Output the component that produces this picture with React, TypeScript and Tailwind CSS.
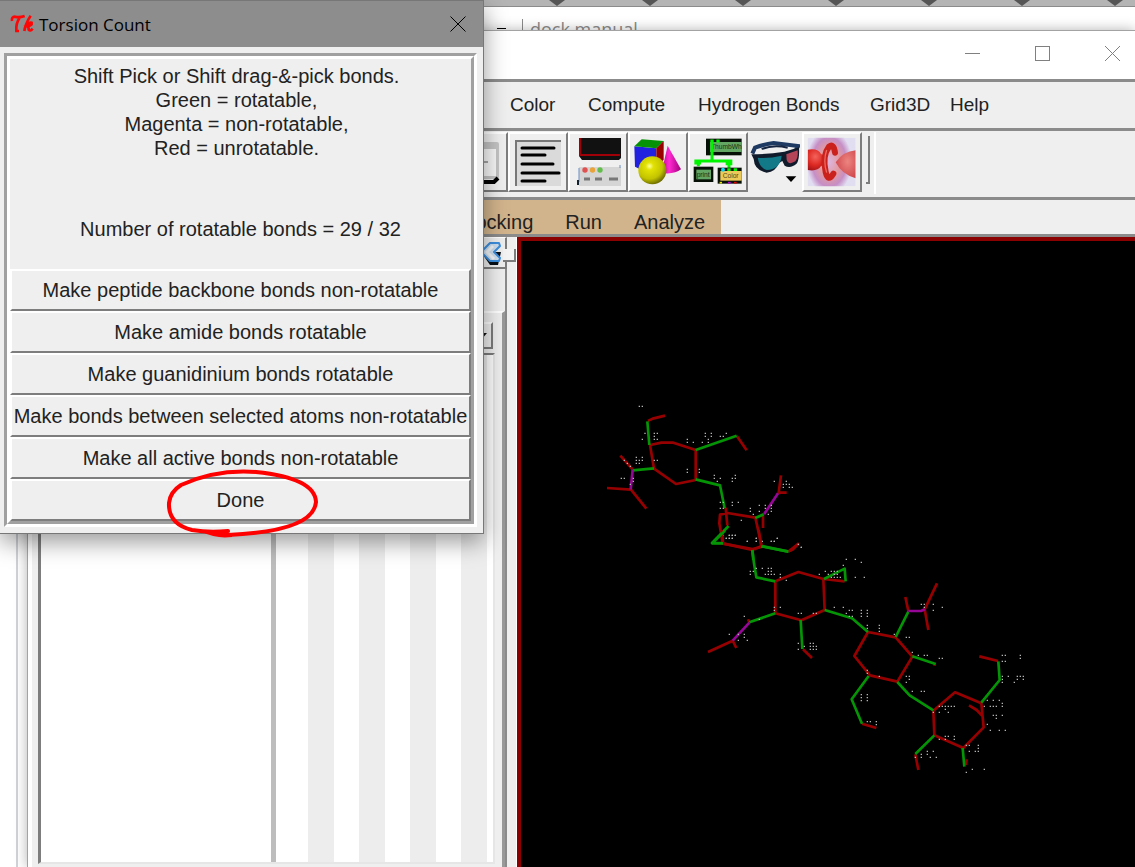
import React from "react";

type Fragment = {
  x: number;
  y: number;
  red: string;
  green: string;
  magenta: string;
  dots: string;
};

// Each fragment is drawn on a grid three times finer than the viewer's own.
const fragments: Fragment[] = [
  {
    x: 590,
    y: 390,
    red: "M174 93L188 86L225 77 M180 165L214 158H250L317 180V270L258 282L192 236L180 165 M440 137L470 181 M91 197L128 238 M51 294L123 299L169 356 M573 256L566 308H590 M407 353L412 406 M412 369L496 383L515 468L487 480L398 460L388 400L390 374L412 369 M519 374V414 M596 484L627 460",
    green:
      "M178 165L172 94 M317 180L440 137 M128 241L192 235 M317 268L390 286L404 355 M416 408L366 459H398 M496 384L521 373 M515 468L596 485 M487 480L490 510",
    magenta: "M128 239L122 299 M564 310L522 373",
    dots: "148 49 157 49 165 130 193 130 202 130 193 139 157 148 193 148 202 148 292 148 292 157 310 157 346 130 364 130 346 139 364 139 355 148 355 157 337 157 391 139 400 139 409 130 139 202 157 202 139 211 148 211 157 211 139 220 148 220 103 211 112 220 121 229 193 211 202 211 292 238 292 247 328 238 328 247 94 265 103 265 130 265 130 274 121 283 373 256 373 265 382 274 391 265 436 256 427 265 436 265 427 274 391 337 400 337 427 337 445 337 427 346 391 355 400 355 481 355 481 364 490 373 508 346 526 346 544 346 526 355 544 355 544 364 535 373 508 364 553 274 589 274 580 283 589 283 598 283 580 292 598 292 607 292 454 391 400 436 418 436 427 436 436 436 409 445 418 445 427 445 472 454 499 445 499 454 517 454 508 472 544 454 553 454 562 445 625 463 634 472",
  },
  {
    x: 690,
    y: 530,
    red: "M96 0L99 41L187 57L214 51L206 0 M295 65L309 58L326 40 M256 154L325 126L400 147L404 240L334 271L256 250V154 M400 147L464 154 M174 268L178 277 M54 366L128 332L139 354 M339 358L366 384 M534 306L617 322L667 380L622 455L540 436L493 378L534 306 M646 201L655 243 M741 160L704 238L715 300 M730 403L738 403",
    green:
      "M105 2L67 40H99 M214 49L295 65 M187 60L192 100L199 142L256 154 M402 147L464 116L467 154 M404 240L486 265L534 306 M256 250L178 277 M332 270L337 357 M617 321L655 245 M667 379L737 402",
    magenta: "M178 278L128 332 M655 243H693L704 238",
    dots: "118 16 127 16 136 16 109 25 118 25 127 25 172 34 199 25 199 34 244 34 253 34 262 25 325 43 334 52 181 124 190 124 199 115 181 133 217 115 235 115 244 115 226 133 235 124 244 124 235 133 244 133 253 133 271 133 271 142 289 151 388 133 406 124 424 124 433 124 442 124 415 133 433 133 442 133 424 142 433 142 442 142 451 142 460 106 469 88 496 88 514 97 496 142 523 142 253 232 271 232 253 241 325 250 334 250 370 250 379 250 433 232 460 232 478 241 487 241 469 250 478 259 487 259 514 241 532 241 514 250 532 250 514 259 532 259 163 259 208 268 118 313 145 313 163 313 163 322 145 331 172 331 325 340 343 349 325 358 361 340 370 340 361 349 370 349 379 349 361 358 370 358 379 358 532 286 532 295 568 286 568 295 568 304 613 313 649 322 658 322 667 367 685 376 703 376 712 376 748 385 757 385 532 421 532 430 568 439 649 439 658 439 649 457 658 448 694 223 703 223 703 232 730 223 730 241 757 232",
  },
  {
    x: 840,
    y: 570,
    red: "M66 461L109 474 M280 422L345 367L424 400L431 472L370 534L283 496L280 422 M387 406L410 420L429 440 M418 259L474 273 M226 553L235 600 M380 568L377 585",
    green:
      "M86 318L35 388L66 461 M172 336L209 376L280 421 M475 274L479 330L424 398 M283 496L226 552 M368 534L373 590",
    magenta: "",
    dots: "64 374 64 383 82 374 82 383 64 392 82 392 82 455 91 455 109 455 109 464 217 364 244 364 253 364 487 256 496 256 487 274 496 274 541 256 541 265 487 319 487 328 505 319 487 337 532 319 541 319 550 319 532 328 550 328 523 337 442 391 460 391 478 391 487 400 433 409 451 409 460 409 469 409 487 409 280 427 298 409 307 409 316 409 325 409 334 409 343 409 316 418 325 427 298 427 460 436 469 436 487 436 469 445 442 463 451 481 478 481 496 481 316 499 325 499 343 499 298 508 316 508 343 508 379 526 388 526 415 526 415 535 388 544 406 544 415 544 244 553 262 544 280 544 262 553 244 562 271 562 289 562 226 562 379 607 397 598 433 598",
  },
];

function dotPath(list: string) {
  const n = list.split(" ");
  let d = "";
  for (let i = 0; i + 1 < n.length; i += 2) d += `M${Number(n[i]) - 2} ${n[i + 1]}h4`;
  return d;
}

function Molecule() {
  return (
    <svg
      width="614"
      height="626"
      viewBox="521 241 614 626"
      className="block shrink-0"
      role="img"
      aria-label="Ligand"
    >
      {fragments.map((f) => (
        <g
          key={f.x}
          transform={`translate(${f.x} ${f.y}) scale(0.33333)`}
          fill="none"
          strokeWidth="8"
          strokeLinejoin="round"
        >
          <path d={f.red} stroke="#960000" />
          <path d={f.green} stroke="#059405" />
          <path d={f.magenta} stroke="#960696" />
          <path d={dotPath(f.dots)} stroke="#b4b4b4" strokeWidth="4" />
        </g>
      ))}
    </svg>
  );
}

function ToolButton({ label, children }: { label: string; children: React.ReactNode }) {
  return (
    <button
      aria-label={label}
      className="flex h-[60px] w-[60px] shrink-0 items-center justify-center border-2 border-t-white border-l-white border-r-[#7d7d7d] border-b-[#7d7d7d] bg-[#efefef]"
    >
      {children}
    </button>
  );
}

function Toolbar() {
  return (
    <div className="flex h-[66px] items-start bg-[#efefef] pt-px pl-[420px]">
      <ToolButton label="Open window">
        <svg width="48" height="48" viewBox="0 0 48 48">
          <rect x="2" y="4" width="43" height="37" rx="2" fill="#c4c4c4" />
          <rect x="4" y="11" width="38" height="27" fill="#f8f8f8" />
          <path d="M12 24H34" stroke="#a5a5a5" strokeWidth="2" />
          <path d="M5 44H40L44 40" stroke="#000" strokeWidth="4" fill="none" />
        </svg>
      </ToolButton>
      <ToolButton label="Text">
        <svg width="48" height="48" viewBox="0 0 48 48">
          <rect x="1" y="2" width="46" height="46" fill="#dadada" />
          <path d="M2 48V3H47" stroke="#777" strokeWidth="2" fill="none" />
          <path
            d="M8 10H40M8 17H31M8 26H39M8 35H45M8 43H31"
            stroke="#000"
            strokeWidth="3"
            strokeLinecap="round"
          />
        </svg>
      </ToolButton>
      <ToolButton label="Show or hide panels">
        <svg width="48" height="48" viewBox="0 0 48 48">
          <path d="M5 0H47V20L45 22H8L5 18Z" fill="#111" />
          <path d="M6 0V17H46" stroke="#a00008" strokeWidth="2" fill="none" />
          <rect x="5" y="29" width="42" height="19" fill="#d5d5d5" />
          <path d="M5 30V44M46 27V30" stroke="#6b8fc0" strokeWidth="1" />
          <rect x="3" y="42" width="2" height="5" fill="#123" />
          <circle cx="11" cy="32" r="2.7" fill="#e05252" />
          <circle cx="18.5" cy="32" r="2.7" fill="#e9a33b" />
          <circle cx="26" cy="32" r="2.7" fill="#63bd4b" />
          <path d="M10 41H16M21 41H28M35 41H44" stroke="#777" strokeWidth="3" />
        </svg>
      </ToolButton>
      <ToolButton label="Geometry">
        <svg width="50" height="50" viewBox="460 37 150 150">
          <defs>
            <radialGradient id="ball" cx=".4" cy=".35" r=".7">
              <stop offset="0" stopColor="#ffff9c" />
              <stop offset=".2" stopColor="#e2e205" />
              <stop offset=".65" stopColor="#c3c300" />
              <stop offset="1" stopColor="#5e5e00" />
            </radialGradient>
            <linearGradient id="cone">
              <stop offset="0" stopColor="#c00090" />
              <stop offset=".4" stopColor="#ff2bd0" />
              <stop offset="1" stopColor="#a1007c" />
            </linearGradient>
          </defs>
          <path d="M464 65L530 71V133H480L466 126Z" fill="#2020e0" />
          <path d="M464 65L486 44L552 49L530 71Z" fill="#069206" />
          <path d="M530 71L552 49V105L530 130Z" fill="#9a0000" />
          <path d="M564 63L604 134Q585 150 545 145Z" fill="url(#cone)" />
          <circle cx="518" cy="137" r="42" fill="url(#ball)" />
        </svg>
      </ToolButton>
      <ToolButton label="Visual programming">
        <svg width="50" height="50" viewBox="40 40 150 150">
          <rect x="79" y="45" width="107" height="50" fill="#061006" />
          <rect x="91" y="55" width="95" height="30" fill="#63a663" />
          <text x="94" y="77" fontFamily="Liberation Sans, sans-serif" fontSize="20" fill="#143014">
            ThumbWh
          </text>
          <path
            d="M97 48V112M44 112H158M56 112V128M148 112V136M92 52H102M110 52H120M44 118H64M138 120H158"
            stroke="#00f400"
            strokeWidth="9"
          />
          <rect x="42" y="129" width="59" height="46" fill="#061006" />
          <rect x="50" y="138" width="44" height="29" fill="#63a663" />
          <text x="51" y="159" fontFamily="Liberation Sans, sans-serif" fontSize="20" fill="#143014">
            print
          </text>
          <rect x="114" y="132" width="72" height="48" fill="#061006" />
          <rect x="122" y="142" width="64" height="29" fill="#ecca5a" />
          <text x="129" y="164" fontFamily="Liberation Sans, sans-serif" fontSize="20" fill="#5b4510">
            Color
          </text>
          <circle cx="130" cy="138" r="6" fill="#11d4ee" />
          <path d="M143 138H172" stroke="#00f400" strokeWidth="8" strokeDasharray="10 9" />
          <path d="M120 177H127" stroke="#e4e400" strokeWidth="5" />
          <path d="M145 177H153" stroke="#b000d0" strokeWidth="5" />
          <path d="M163 177H171" stroke="#e00000" strokeWidth="5" />
        </svg>
      </ToolButton>
      <button
        aria-label="Stereo view"
        className="flex h-[60px] w-[54px] shrink-0 items-center justify-center bg-[#efefef]"
      >
        <svg width="50" height="50" viewBox="209 40 150 150">
          <path
            d="M216 90L224 72Q250 62 280 58L354 67L347 78"
            fill="none"
            stroke="#1e3a63"
            strokeWidth="12"
          />
          <path d="M244 76Q280 62 322 72" fill="none" stroke="#152440" strokeWidth="6" />
          <path
            d="M213 92Q260 92 312 84L356 71Q358 105 350 119Q330 137 313 126L306 112L295 119Q286 145 259 147Q222 140 220 106Z"
            fill="#101c2c"
          />
          <path d="M232 102Q265 105 304 96Q300 137 259 139Q238 133 232 102Z" fill="#117987" />
          <path d="M318 92L352 80Q354 102 345 113Q324 126 319 108Z" fill="#b44558" />
          <path d="M316 158H348L332 175Z" fill="#000" />
        </svg>
      </button>
      <ToolButton label="Docking tools">
        <svg width="50" height="50" viewBox="382 37 150 150">
          <defs>
            <radialGradient id="red-ball" cx=".4" cy=".35" r=".7">
              <stop offset="0" stopColor="#f4645c" />
              <stop offset=".6" stopColor="#dc2822" />
              <stop offset="1" stopColor="#a31519" />
            </radialGradient>
            <radialGradient id="pink-ball" cx=".6" cy=".4" r=".7">
              <stop offset="0" stopColor="#ec8580" />
              <stop offset="1" stopColor="#cd4248" />
            </radialGradient>
            <radialGradient id="halo">
              <stop offset="0" stopColor="#dcb6de" />
              <stop offset=".45" stopColor="#e39aa0" />
              <stop offset=".75" stopColor="#c58fc6" />
              <stop offset="1" stopColor="#e2def2" />
            </radialGradient>
            <clipPath id="tile">
              <rect x="384" y="39" width="144" height="146" />
            </clipPath>
          </defs>
          <g clipPath="url(#tile)">
            <rect x="384" y="39" width="144" height="146" fill="#e2def2" />
            <ellipse cx="449" cy="112" rx="68" ry="98" fill="url(#halo)" />
            <path d="M384 75Q416 70 424 88L442 96V117L424 124Q414 141 384 136Z" fill="url(#red-ball)" />
            <path d="M528 77Q490 80 468 113Q486 149 528 161Z" fill="url(#pink-ball)" />
            <path
              d="M466 84Q462 55 448 66Q427 93 438 142Q445 174 461 147"
              fill="none"
              stroke="#ca211d"
              strokeWidth="18"
              strokeLinecap="round"
            />
            <path d="M441 76Q430 108 441 144" fill="none" stroke="#ed695f" strokeWidth="4" />
          </g>
        </svg>
      </ToolButton>
      <div className="mt-1 ml-1 h-12 w-1 border-r-2 border-b-2 border-[#7d7d7d]" />
      <div className="h-[62px] w-[6px] border-r-2 border-white" />
    </div>
  );
}

function TreePanel() {
  return (
    <div className="flex w-[479px] shrink-0 flex-col bg-[#efefef]">
      <div className="flex h-[32px] justify-end border-b-2 border-[#7d7d7d]">
        <button
          aria-label="Collapse panel"
          className="flex w-[30px] items-center border-r-2 border-t border-t-white border-r-[#7d7d7d]"
        >
          <svg width="28" height="28" viewBox="0 0 28 28">
            <path d="M4 13H24L21 26H13Z" fill="#081018" />
            <path d="M13 4H22L23 7L17 13L23 19L22 22H13L4 13Z" fill="#cfe0f0" stroke="#3c8fdf" strokeWidth="2" strokeLinejoin="round" />
            <path d="M16 7L10 13L17 20" fill="none" stroke="#f3f7fb" strokeWidth="3" />
          </svg>
        </button>
      </div>
      <div className="h-[42px] border-r-2 border-[#8b8b8b]" />
      <div className="flex flex-1 border-r-2 border-[#8b8b8b]">
        <div className="flex flex-1 flex-col border-t-2 border-r-[3px] border-l-4 border-t-white border-r-[#999] border-l-white pr-[7px] pb-[3px] pl-[6px]">
          <div className="flex h-[40px] items-end justify-end pr-[2px] pb-1">
            <button
              aria-label="Choose view"
              className="flex h-[27px] w-[24px] items-center justify-center border-2 border-t-white border-l-white border-r-[#7d7d7d] border-b-[#7d7d7d]"
            >
              <svg width="12" height="8" viewBox="0 0 12 8">
                <path d="M0 1H12L6 8Z" fill="#111" />
              </svg>
            </button>
          </div>
          <div className="flex flex-1 border-t-2 border-r-2 border-b-2 border-l-[3px] border-t-[#7d7d7d] border-r-[#e6e6e6] border-b-[#e6e6e6] border-l-[#7d7d7d] bg-white">
            <div className="w-[230px]" />
            <div className="w-[5px] bg-[#bdbdbd]" />
            <div className="flex flex-1 gap-[25px] pl-8">
              <div className="w-[26px] bg-[#ededed]" />
              <div className="w-[26px] bg-[#ededed]" />
              <div className="w-[26px] bg-[#ededed]" />
              <div className="w-[26px] bg-[#ededed]" />
            </div>
          </div>
        </div>
      </div>
    </div>
  );
}

function MainWindow() {
  return (
    <section
      aria-label="Molecule viewer"
      className="absolute top-[30px] right-0 bottom-0 left-[27px] flex flex-col border-t border-l border-[#a3a3a3] bg-white shadow-[0_0_12px_rgba(0,0,0,0.3)]"
    >
      <div className="flex h-[48px] shrink-0 justify-end gap-[25px] pb-[3px] text-[#808080]">
        <button aria-label="Minimize" className="flex w-[45px] items-center justify-center">
          <svg width="15" height="15" viewBox="0 0 15 15" shapeRendering="crispEdges">
            <path d="M0 7.5H15" stroke="currentColor" />
          </svg>
        </button>
        <button aria-label="Maximize" className="flex w-[45px] items-center justify-center">
          <svg width="15" height="15" viewBox="0 0 15 15" shapeRendering="crispEdges">
            <rect x=".5" y=".5" width="14" height="14" fill="none" stroke="currentColor" />
          </svg>
        </button>
        <button aria-label="Close viewer" className="flex w-[45px] items-center justify-center">
          <svg width="15" height="15" viewBox="0 0 15 15">
            <path d="M0 0L15 15M15 0L0 15" stroke="currentColor" />
          </svg>
        </button>
      </div>
      <nav
        aria-label="Main menu"
        className="flex h-[49px] shrink-0 items-center border-t-[3px] border-[#8b8b8b] bg-[#efefef] pl-[482px] text-left text-[19px] whitespace-nowrap text-[#222]"
      >
        <button className="w-[78px] text-left">Color</button>
        <button className="w-[110px] text-left">Compute</button>
        <button className="w-[172px] text-left">Hydrogen Bonds</button>
        <button className="w-[80px] text-left">Grid3D</button>
        <button className="text-left">Help</button>
      </nav>
      <div className="shrink-0 border-y-[3px] border-[#8b8b8b]">
        <Toolbar />
      </div>
      <nav
        aria-label="Docking menu"
        className="flex h-[37px] shrink-0 border-b-[3px] border-[#8b8b8b] bg-[#efefef]"
      >
        <div className="flex items-end gap-8 bg-[#d2b48c] pr-4 pl-[433px] text-[20px] leading-6 text-[#222]">
          <button>Docking</button>
          <button>Run</button>
          <button>Analyze</button>
        </div>
      </nav>
      <div className="flex min-h-0 flex-1">
        <TreePanel />
        <div className="relative w-[10px] shrink-0 border-r border-white bg-[#efefef]">
          <button
            aria-label="Resize panel"
            className="absolute top-3 -left-1 h-[13px] w-[13px] border-r-2 border-b-2 border-[#7d7d7d] bg-[#f4f4f4]"
          />
        </div>
        <main className="min-w-0 flex-1 overflow-hidden border-t-4 border-l-4 border-[#8b0000] bg-black">
          <Molecule />
        </main>
      </div>
    </section>
  );
}

const actions = [
  "Make peptide backbone bonds non-rotatable",
  "Make amide bonds rotatable",
  "Make guanidinium bonds rotatable",
  "Make bonds between selected atoms non-rotatable",
  "Make all active bonds non-rotatable",
  "Done",
];

function TorsionDialog() {
  return (
    <section
      aria-label="Torsion Count"
      className="absolute top-0 left-0 w-[484px] border-t border-r border-b border-[#777] bg-[#efefef] pb-[6px] shadow-[0_8px_22px_rgba(0,0,0,0.4)]"
    >
      <header className="flex h-[46px] items-center bg-[#8d8d8d] pr-[17px] pl-[10px]">
        <svg width="24" height="20" viewBox="30 42 72 60" aria-hidden="true">
          <path
            d="M36 63Q34 50 45 50Q58 54 74 48M59 53Q47 70 49 93H57M92 47Q84 58 78 74Q74 84 73 93M78 80Q88 65 95 68Q97 77 82 79Q87 82 86 89Q91 95 98 86"
            fill="none"
            stroke="#ff0606"
            strokeWidth="8"
          />
        </svg>
        <h1 className="ml-[5px] flex-1 pt-[2px] font-['Open_Sans','Noto_Sans',sans-serif] text-[17px] text-black">
          Torsion Count
        </h1>
        <button aria-label="Close" className="p-0">
          <svg width="16" height="16" viewBox="0 0 16 16" className="block">
            <path d="M.5 .5L15.5 15.5M15.5 .5L.5 15.5" stroke="#000" />
          </svg>
        </button>
      </header>
      <div className="mt-[6px] mr-[6px] ml-1 border-[3px] border-t-[#a0a0a0] border-r-white border-b-white border-l-[#a0a0a0]">
        <div className="border-[3px] border-t-white border-r-[#a0a0a0] border-b-[#a0a0a0] border-l-white text-[20px] text-[#222]">
          <div className="h-[210px] pt-[5px] text-center leading-6">
            <div className="pr-2">
              <p>Shift Pick or Shift drag-&amp;-pick bonds.</p>
              <p>Green = rotatable,</p>
              <p>Magenta = non-rotatable,</p>
              <p>Red = unrotatable.</p>
            </div>
            <p className="mt-[57px]">Number of rotatable bonds = 29 / 32</p>
          </div>
          <div className="flex flex-col">
            {actions.map((a) => (
              <button
                key={a}
                className="h-[42px] border-2 border-t-white border-r-[#7d7d7d] border-b-[#7d7d7d] border-l-white whitespace-nowrap"
              >
                {a}
              </button>
            ))}
          </div>
        </div>
      </div>
      <svg
        width="156"
        height="72"
        viewBox="0 0 156 72"
        aria-hidden="true"
        className="pointer-events-none absolute top-[466px] left-[164px]"
      >
        <path
          d="M64 64Q45 66 28 63Q4 57 5 36Q6 25 17 18Q52 2 92 5Q151 11 152 35C150 58 110 66 64 68"
          fill="none"
          stroke="#f00"
          strokeWidth="4"
          strokeLinecap="round"
        />
        <path d="M38 65Q50 66 68 66V70Q52 72 38 65Z" fill="#f00" />
      </svg>
    </section>
  );
}

function Backdrop() {
  return (
    <>
      <div className="flex h-[7px] gap-[69px] overflow-hidden border-b border-[#8b8b8b] bg-[#b4b4b4] pl-[545px]">
        {[0, 1, 2, 3, 4, 5, 6].map((n) => (
          <svg key={n} width="24" height="6" viewBox="0 0 24 6" className="shrink-0">
            <path d="M4 0H20L12 6Z" fill="#555" />
          </svg>
        ))}
      </div>
      <div className="flex h-6 items-end overflow-hidden pl-[497px] font-['Open_Sans','Noto_Sans',sans-serif] text-[18px] leading-6 text-[#8b8b8b]">
        <div className="mb-[2px] h-px w-[9px] bg-black" />
        <div className="ml-4 h-3 w-px bg-[#8b8b8b]" />
        <span className="ml-[7px] h-[14px]">dock manual</span>
      </div>
      <div className="h-[836px] w-[18px] border-r-2 border-[#d0d4d8]" />
    </>
  );
}

export default function App() {
  return (
    <div className="relative min-h-screen overflow-hidden bg-white font-['Liberation_Sans',Arial,sans-serif]">
      <Backdrop />
      <MainWindow />
      <TorsionDialog />
    </div>
  );
}
